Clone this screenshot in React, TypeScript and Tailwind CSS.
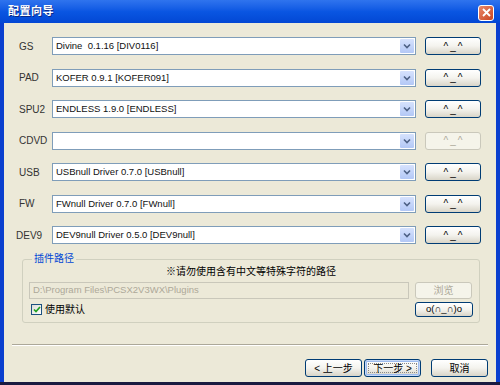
import React from 'react';

type Plugin = { label: string; value: string; disabled?: boolean; shift?: boolean };

const plugins: Plugin[] = [
    { label: 'GS', value: 'Divine  0.1.16 [DIV0116]' },
    { label: 'PAD', value: 'KOFER 0.9.1 [KOFER091]' },
    { label: 'SPU2', value: 'ENDLESS 1.9.0 [ENDLESS]' },
    { label: 'CDVD', value: '', disabled: true },
    { label: 'USB', value: 'USBnull Driver 0.7.0 [USBnull]' },
    { label: 'FW', value: 'FWnull Driver 0.7.0 [FWnull]' },
    { label: 'DEV9', value: 'DEV9null Driver 0.5.0 [DEV9null]', shift: true },
];

const font = { fontFamily: "'Liberation Sans', 'Noto Sans CJK SC', sans-serif" };

const XpButton: React.FC<{ children: React.ReactNode; disabled?: boolean; focused?: boolean; className?: string }> = ({ children, disabled, focused, className }) => {
    if (disabled) {
        return (
            <div className={`flex items-center justify-center rounded-[3px] border border-[#cac8bb] bg-[#f5f4ea] text-[#aca899] ${className ?? ''}`}>
                {children}
            </div>
        );
    }
    return (
        <div
            className={`flex items-center justify-center rounded-[3px] border border-[#003c74] bg-gradient-to-b from-white via-[#f4f3ee] to-[#d9d5c8] text-black ${
                focused ? 'shadow-[inset_0_0_0_1px_#c5d8f7,inset_0_0_0_2px_#9dbbee]' : ''
            } ${className ?? ''}`}
        >
            {focused ? (
                <span className="flex h-[calc(100%-6px)] w-[calc(100%-6px)] items-center justify-center border border-dotted border-[#8a8a8a]">{children}</span>
            ) : (
                children
            )}
        </div>
    );
};

const ComboBox: React.FC<{ value: string }> = ({ value }) => (
    <div className="flex h-[18px] w-[364px] items-center border border-[#7f9db9] bg-white pr-px">
        <span className="flex-1 whitespace-pre pl-[3px] text-[9.5px] leading-none text-[#111]">{value}</span>
        <div className="flex h-[14px] w-[14px] items-center justify-center rounded-[1px] bg-gradient-to-b from-[#d6e2fd] to-[#b3c8f6]">
            <svg width="8" height="6" viewBox="0 0 8 6">
                <path d="M1 1.5 L4 4.5 L7 1.5" stroke="#4d6185" strokeWidth="1.6" fill="none" />
            </svg>
        </div>
    </div>
);

export default function App() {
    return (
        <div className="flex h-[385px] w-[500px] flex-col overflow-hidden bg-[#0a3fcf]" style={font}>
            {/* title bar */}
            <div className="flex h-[23px] shrink-0 items-center justify-between bg-gradient-to-b from-[#2f74ee] via-[#0a56e2] to-[#0347d4] pl-[8px] pr-[6px]">
                <span className="text-[11px] font-bold tracking-[0.5px] text-white [text-shadow:1px_1px_0_#0a2a88]">配置向导</span>
                <div className="mt-[2px] flex h-[16px] w-[16px] items-center justify-center rounded-[3px] border border-white bg-gradient-to-br from-[#e9886a] to-[#c9431c]">
                    <svg width="9" height="9" viewBox="0 0 9 9">
                        <path d="M1 1 L8 8 M8 1 L1 8" stroke="white" strokeWidth="1.8" />
                    </svg>
                </div>
            </div>

            {/* body */}
            <div className="mx-[4px] flex h-[359px] flex-col bg-[#ece9d8] pt-[14px]">
                <div className="flex flex-col gap-[13.5px]">
                    {plugins.map((p) => (
                        <div key={p.label} className="flex h-[18px] items-center">
                            <span className={`w-[48px] text-[10px] text-[#333] ${p.shift ? 'pl-[12px]' : 'pl-[15px]'}`}>{p.label}</span>
                            <ComboBox value={p.value} />
                            <XpButton disabled={p.disabled} className="ml-[9px] h-[18px] w-[56px] text-[10px]">
                                <span className="tracking-[2px] pl-[2px]">^_^</span>
                            </XpButton>
                        </div>
                    ))}
                </div>

                <fieldset className="ml-[18px] mt-[8px] h-[71px] w-[458px] rounded-[3px] border border-[#d0d0bf] px-[6px]">
                    <legend className="ml-[3px] px-[2px] text-[10px] leading-[14px] text-[#0046d5]">插件路径</legend>
                    <div className="text-center text-[10px] leading-[12px] text-black">※请勿使用含有中文等特殊字符的路径</div>
                    <div className="mt-[4px] flex items-center">
                        <div className="flex h-[17px] w-[380px] items-center border border-[#c9c7ba] bg-[#ece9d8] pl-[3px] text-[9.5px] text-[#aca899]">
                            D:\Program Files\PCSX2V3WX\Plugins
                        </div>
                        <XpButton disabled className="ml-[6px] h-[17px] w-[57px] text-[10px]">
                            浏览
                        </XpButton>
                    </div>
                    <div className="mt-[3px] flex items-center justify-between">
                        <div className="flex items-center">
                            <div className="ml-[2px] flex h-[11px] w-[11px] items-center justify-center border border-[#1c5180] bg-gradient-to-br from-[#dcdcd7] to-white">
                                <svg width="8" height="7" viewBox="0 0 8 7">
                                    <path d="M1 3.5 L3 5.5 L7 1" stroke="#21a121" strokeWidth="1.7" fill="none" />
                                </svg>
                            </div>
                            <span className="ml-[3px] text-[10px] text-black">使用默认</span>
                        </div>
                        <XpButton className="h-[15px] w-[58px] text-[9.5px]">o(∩_∩)o</XpButton>
                    </div>
                </fieldset>

                <div className="ml-[8px] mt-[21px] h-[2px] w-[476px] border-t border-[#aca899] border-b border-b-white" />

                <div className="mr-[8px] mt-[13px] flex justify-end">
                    <XpButton className="h-[18px] w-[57px] text-[10px]">&lt; 上一步</XpButton>
                    <XpButton focused className="ml-[2px] h-[18px] w-[57px] text-[10px]">
                        下一步 &gt;
                    </XpButton>
                    <XpButton className="ml-[10px] h-[18px] w-[57px] text-[10px]">取消</XpButton>
                </div>
            </div>
            <div className="h-[3px] bg-[#1a1a40]" />
        </div>
    );
}
